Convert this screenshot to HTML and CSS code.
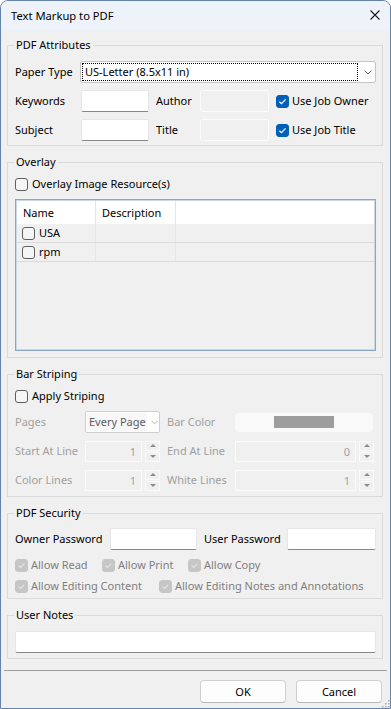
FILE: index.html
```html
<!DOCTYPE html>
<html lang="en">
<head>
    <meta charset="UTF-8">
    <meta name="viewport" content="width=device-width, initial-scale=1.0">
    <title>Text Markup to PDF</title>
    <link rel="stylesheet" href="styles.css">
</head>
<body>
    <div class="window">
        <div class="titlebar">
            <span class="title">Text Markup to PDF</span>
            <svg class="close" width="10" height="10" viewBox="0 0 10 10"><path d="M0.5 0.5 L9.5 9.5 M9.5 0.5 L0.5 9.5" stroke="#1b1b1b" stroke-width="1.1"/></svg>
        </div>

        <div class="content">
            <fieldset class="group attrs">
                <legend>PDF Attributes</legend>
                <div class="row">
                    <label class="lbl paper-lbl">Paper Type</label>
                    <div class="select paper">
                        <span class="focus">US-Letter (8.5x11 in)</span>
                        <svg class="chev" width="8" height="5" viewBox="0 0 8 5"><path d="M0.5 0.5 L4 4 L7.5 0.5" fill="none" stroke="#666" stroke-width="1"/></svg>
                    </div>
                </div>
                <div class="row">
                    <label class="lbl kw-lbl">Keywords</label>
                    <input class="field kw-in" type="text">
                    <label class="lbl au-lbl">Author</label>
                    <input class="field off au-in" type="text" disabled>
                    <span class="cb on"><svg width="13" height="13" viewBox="0 0 13 13"><path d="M3.4 6.7 L5.5 8.7 L9.6 4.4" fill="none" stroke="#fff" stroke-width="1.2"/></svg></span>
                    <span>Use Job Owner</span>
                </div>
                <div class="row">
                    <label class="lbl kw-lbl">Subject</label>
                    <input class="field kw-in" type="text">
                    <label class="lbl au-lbl">Title</label>
                    <input class="field off au-in" type="text" disabled>
                    <span class="cb on"><svg width="13" height="13" viewBox="0 0 13 13"><path d="M3.4 6.7 L5.5 8.7 L9.6 4.4" fill="none" stroke="#fff" stroke-width="1.2"/></svg></span>
                    <span>Use Job Title</span>
                </div>
            </fieldset>

            <fieldset class="group overlay">
                <legend>Overlay</legend>
                <div class="check-row">
                    <span class="cb"></span><span>Overlay Image Resource(s)</span>
                </div>
                <div class="list">
                    <div class="list-head">
                        <div class="col c1">Name</div>
                        <div class="col c2">Description</div>
                        <div class="col c3"></div>
                    </div>
                    <div class="list-row">
                        <div class="col c1"><span class="cb"></span>USA</div>
                        <div class="col c2"></div>
                        <div class="col c3"></div>
                    </div>
                    <div class="list-row">
                        <div class="col c1"><span class="cb"></span>rpm</div>
                        <div class="col c2"></div>
                        <div class="col c3"></div>
                    </div>
                </div>
            </fieldset>

            <fieldset class="group striping">
                <legend>Bar Striping</legend>
                <div class="check-row">
                    <span class="cb"></span><span>Apply Striping</span>
                </div>
                <div class="stripe-grid">
                    <span class="dim">Pages</span>
                    <div class="select pages">
                        <span class="pages-text">Every Page</span>
                        <svg class="chev" width="8" height="5" viewBox="0 0 8 5"><path d="M0.5 0.5 L4 4 L7.5 0.5" fill="none" stroke="#aaa" stroke-width="1"/></svg>
                    </div>
                    <span class="dim second">Bar Color</span>
                    <div class="color-btn"><span class="swatch"></span></div>

                    <span class="dim">Start At Line</span>
                    <div class="num">1</div>
                    <div class="spin"><span class="up"></span><span class="down"></span></div>
                    <span class="dim second">End At Line</span>
                    <div class="num">0</div>
                    <div class="spin"><span class="up"></span><span class="down"></span></div>

                    <span class="dim">Color Lines</span>
                    <div class="num">1</div>
                    <div class="spin"><span class="up"></span><span class="down"></span></div>
                    <span class="dim second">White Lines</span>
                    <div class="num">1</div>
                    <div class="spin"><span class="up"></span><span class="down"></span></div>
                </div>
            </fieldset>

            <fieldset class="group security">
                <legend>PDF Security</legend>
                <div class="row">
                    <label class="lbl ow-lbl">Owner Password</label>
                    <input class="field ow-in" type="password">
                    <label class="lbl us-lbl">User Password</label>
                    <input class="field us-in" type="password">
                </div>
                <div class="allow-row first">
                    <span class="allow w-read"><span class="cb dis"><svg width="13" height="13" viewBox="0 0 13 13"><path d="M3.6 6.7 L5.5 8.5 L9.4 4.6" fill="none" stroke="#e4e4e4" stroke-width="1.1"/></svg></span>Allow Read</span>
                    <span class="allow w-print"><span class="cb dis"><svg width="13" height="13" viewBox="0 0 13 13"><path d="M3.6 6.7 L5.5 8.5 L9.4 4.6" fill="none" stroke="#e4e4e4" stroke-width="1.1"/></svg></span>Allow Print</span>
                    <span class="allow"><span class="cb dis"><svg width="13" height="13" viewBox="0 0 13 13"><path d="M3.6 6.7 L5.5 8.5 L9.4 4.6" fill="none" stroke="#e4e4e4" stroke-width="1.1"/></svg></span>Allow Copy</span>
                </div>
                <div class="allow-row">
                    <span class="allow w-edit"><span class="cb dis"><svg width="13" height="13" viewBox="0 0 13 13"><path d="M3.6 6.7 L5.5 8.5 L9.4 4.6" fill="none" stroke="#e4e4e4" stroke-width="1.1"/></svg></span>Allow Editing Content</span>
                    <span class="allow"><span class="cb dis"><svg width="13" height="13" viewBox="0 0 13 13"><path d="M3.6 6.7 L5.5 8.5 L9.4 4.6" fill="none" stroke="#e4e4e4" stroke-width="1.1"/></svg></span>Allow Editing Notes and Annotations</span>
                </div>
            </fieldset>

            <fieldset class="group notes">
                <legend>User Notes</legend>
                <input class="field notes-in" type="text">
            </fieldset>
        </div>

        <div class="footer">
            <div class="sep"></div>
            <div class="buttons">
                <button class="btn">OK</button>
                <button class="btn">Cancel</button>
            </div>
        </div>

        <svg class="grip" width="9" height="9" viewBox="0 0 9 9">
            <rect x="7" y="1" width="1.5" height="1.5" fill="#aaa"/>
            <rect x="4" y="4" width="1.5" height="1.5" fill="#aaa"/>
            <rect x="7" y="4" width="1.5" height="1.5" fill="#aaa"/>
            <rect x="1" y="7" width="1.5" height="1.5" fill="#aaa"/>
            <rect x="4" y="7" width="1.5" height="1.5" fill="#aaa"/>
            <rect x="7" y="7" width="1.5" height="1.5" fill="#aaa"/>
        </svg>
    </div>
</body>
</html>
```

FILE: styles.css
```css
body {
    margin: 0;
    font-family: "Noto Sans", Arial, sans-serif;
    font-size: 11px;
    line-height: 16px;
    color: #000;
    background: #fff;
}
.window {
    position: relative;
    width: 391px;
    height: 709px;
    box-sizing: border-box;
    border: 1px solid #6384a8;
    border-radius: 8px 8px 0 0;
    background: #f0f0f0;
    overflow: hidden;
}
.titlebar {
    height: 30px;
    background: #eef3f9;
    display: flex;
    align-items: center;
    justify-content: space-between;
    padding: 0 10px 0 10px;
    font-size: 11.2px;
}
.close {
    margin-top: -2px;
}
.content {
    padding: 6px 7px 0 6px;
}

/* group boxes */
.group {
    margin: 0 0 8px;
    padding: 0 6px 0 7px;
    border: 1px solid #dadada;
    min-width: 0;
}
.group legend {
    padding: 0 2px;
    margin-left: -1px;
    line-height: 16px;
}
.attrs {
    padding-top: 8px;
    padding-bottom: 4px;
}
.overlay {
    padding-top: 6px;
    padding-bottom: 6px;
}
.striping {
    padding-top: 6px;
    padding-bottom: 5px;
}
.security {
    padding-top: 7px;
    padding-bottom: 4px;
}
.notes {
    padding-top: 8px;
    padding-bottom: 5px;
    margin-bottom: 0;
}

.row {
    display: flex;
    align-items: center;
    height: 22px;
    white-space: nowrap;
}
.row + .row {
    margin-top: 7px;
}
.lbl {
    flex: none;
}
.paper-lbl { width: 65px; }
.kw-lbl { width: 66px; }
.au-lbl { width: 44px; margin-left: 7px; }
.ow-lbl { width: 95px; }
.us-lbl { width: 83px; padding-left: 7px; }

.field {
    box-sizing: border-box;
    height: 22px;
    margin: 0;
    padding: 0 4px;
    font: inherit;
    background: #fff;
    border: 1px solid #e6e6e6;
    border-bottom-color: #878787;
    border-radius: 2px;
    outline: none;
}
.field.off {
    background: #f0f0f0;
    border-color: #fafafa;
}
.kw-in { width: 68px; }
.au-in { width: 69px; }
.ow-in { width: 87px; }
.us-in { flex: 1; min-width: 0; }
.notes-in { width: 100%; display: block; }

/* drop downs */
.select {
    box-sizing: border-box;
    height: 22px;
    display: flex;
    align-items: center;
    background: #fff;
    border: 1px solid #c4c4c4;
    border-radius: 2px;
}
.paper {
    flex: 1;
    padding: 1px;
}
.paper .focus {
    box-sizing: border-box;
    width: 276px;
    height: 18px;
    padding-left: 2px;
    border: 1px dotted #000;
    line-height: 16px;
}
.paper .chev {
    margin-left: 6px;
}
.pages {
    grid-column: span 2;
    padding: 1px;
    border-color: #cfcfcf;
}
.pages-text {
    height: 18px;
    padding: 0 1px 0 2px;
    white-space: nowrap;
    background: #f7f7f7;
    color: #5c5c5c;
    line-height: 18px;
}
.pages .chev {
    margin-left: 4px;
}

/* check boxes */
.cb {
    box-sizing: border-box;
    flex: none;
    width: 13px;
    height: 13px;
    margin-right: 4px;
    border: 1px solid #5f5f5f;
    border-radius: 3px;
    background: #f5f5f5;
    display: inline-flex;
}
.cb svg {
    margin: -1px;
}
.cb.on {
    margin-left: 7px;
    margin-right: 3px;
    border-color: #005fb8;
    background: #005fb8;
}
.cb.dis {
    border-color: #c6c6c6;
    background: #c6c6c6;
}
.check-row {
    display: flex;
    align-items: center;
    height: 16px;
}

/* overlay list */
.list {
    box-sizing: border-box;
    height: 152px;
    margin-top: 7px;
    border: 1px solid #8aa6c6;
    box-shadow: inset 0 0 0 1px #c9d7e7;
    padding: 1px;
    background: #f0f0f0;
}
.list-head, .list-row {
    display: flex;
}
.list-head {
    height: 23px;
    background: #fff;
    align-items: center;
}
.list-row {
    height: 18px;
    border-bottom: 1px solid #dcdcdc;
    align-items: center;
}
.col {
    box-sizing: border-box;
    height: 100%;
    display: flex;
    align-items: center;
    padding-left: 6px;
}
.c1 { width: 79px; border-right: 1px solid #e6e6e6; }
.c2 { width: 80px; border-right: 1px solid #e6e6e6; }
.c3 { flex: 1; }
.list-row .c1 { padding-left: 5px; }

/* bar striping */
.stripe-grid {
    display: grid;
    grid-template-columns: 70px 57px 18px 75px 121px 18px;
    grid-auto-rows: 22px;
    row-gap: 7px;
    align-items: center;
    margin-top: 7px;
}
.dim {
    color: #a0a0a0;
    white-space: nowrap;
}
.dim.second {
    padding-left: 7px;
}
.color-btn {
    grid-column: span 2;
    box-sizing: border-box;
    width: 138px;
    height: 19px;
    border-radius: 4px;
    background: #f9f9f9;
    display: flex;
    align-items: center;
    justify-content: center;
}
.swatch {
    width: 60px;
    height: 12px;
    background: #9d9d9d;
}
.num {
    box-sizing: border-box;
    height: 21px;
    border: 1px solid #fafafa;
    background: #f0f0f0;
    color: #a0a0a0;
    text-align: right;
    padding-right: 5px;
    line-height: 19px;
}
.spin {
    justify-self: end;
    width: 15px;
    height: 21px;
    display: flex;
    flex-direction: column;
    justify-content: space-between;
}
.spin span {
    box-sizing: border-box;
    height: 10px;
    border: 1px solid #fafafa;
    display: flex;
    align-items: center;
    justify-content: center;
}
.spin .up::after {
    content: "";
    border-left: 3px solid transparent;
    border-right: 3px solid transparent;
    border-bottom: 3px solid #8c8c8c;
}
.spin .down::after {
    content: "";
    border-left: 3px solid transparent;
    border-right: 3px solid transparent;
    border-top: 3px solid #8c8c8c;
}

/* security */
.allow-row {
    display: flex;
    align-items: center;
    height: 16px;
    margin-top: 5px;
}
.allow-row.first {
    margin-top: 7px;
}
.allow {
    display: inline-flex;
    align-items: center;
    color: #808080;
    white-space: nowrap;
}
.allow .cb {
    margin-right: 3px;
}
.w-read { width: 87px; }
.w-print { width: 86px; }
.w-edit { width: 144px; }

/* bottom */
.footer {
    padding: 11px 3px 0;
}
.sep {
    height: 1px;
    background: #a0a0a0;
}
.buttons {
    display: flex;
    justify-content: flex-end;
    gap: 10px;
    margin-top: 9px;
    padding-right: 5px;
}
.btn {
    width: 86px;
    height: 23px;
    font: inherit;
    color: #000;
    background: #fdfdfd;
    border: 1px solid #d0d0d0;
    border-bottom-color: #b8b8b8;
    border-radius: 4px;
    padding: 0;
}
.grip {
    position: absolute;
    right: 0;
    bottom: 0;
}
```
